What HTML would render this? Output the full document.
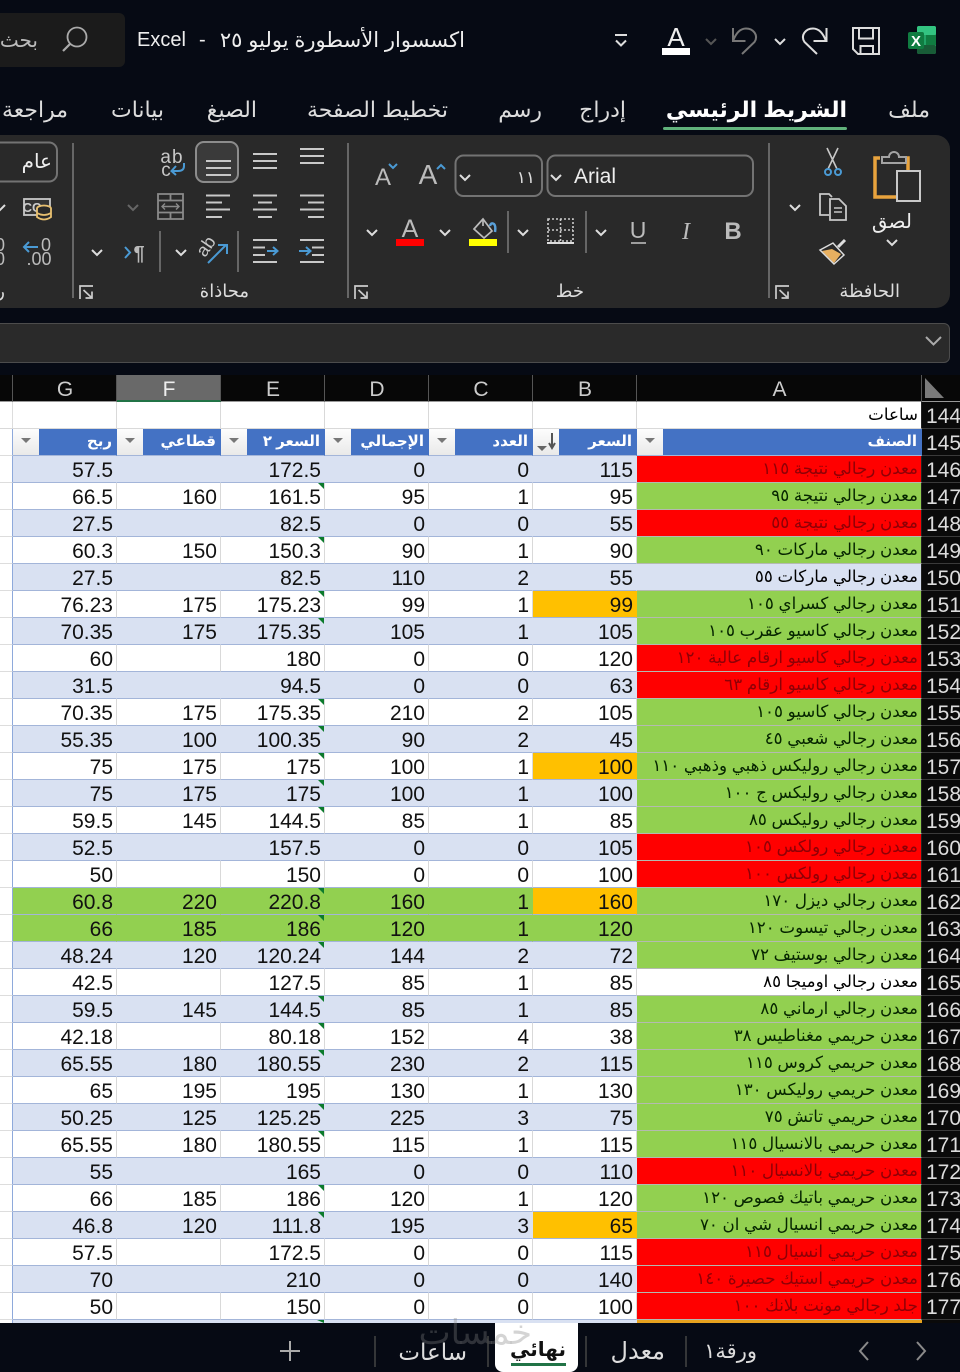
<!DOCTYPE html>
<html lang="ar">
<head>
<meta charset="utf-8">
<title>Excel</title>
<style>
html,body{margin:0;padding:0}
body{width:960px;height:1372px;overflow:hidden;position:relative;background:#060a14;font-family:"Liberation Sans","DejaVu Sans",sans-serif;color:#fff}
.abs{position:absolute}
.t{position:absolute;white-space:nowrap;font-family:"Liberation Sans","DejaVu Sans",sans-serif;color:#eee;direction:rtl}
.tab{font-size:22px;line-height:30px;top:95px;color:#ddd}
.lbl{font-size:18px;line-height:20px;top:281px;color:#ddd}
svg text{font-family:"Liberation Sans","DejaVu Sans",sans-serif}
.ch{position:absolute;top:375px;height:26px;line-height:29px;text-indent:1px;text-align:center;font-size:21px;color:#ccc;background:#070707;border-right:1px solid #555;border-bottom:1px solid #999;box-sizing:content-box}
table{position:absolute;left:0;top:402px;width:960px;table-layout:fixed;border-collapse:separate;border-spacing:0}
td{height:27px;box-sizing:border-box;padding:3px 3px 0 0;line-height:23px;font-size:21px;color:#111;text-align:right;white-space:nowrap;overflow:hidden;border-bottom:1px solid #a3b5d9;border-right:1px solid #d9d9d9;background:#fff;position:relative}
td:first-child{background:#fff;border-right:1px solid #8ea9db;border-bottom:1px solid #ddd;padding:0}
td:last-child{background:#0a0a0a;color:#ddd;text-align:left;padding-left:4px;padding-right:0;border-right:0;border-bottom:1px solid #3a3a3a;overflow:hidden}
tr.b td:not(:first-child):not(:last-child){background:#d9e1f2;border-right-color:#d9e1f2}
tr.g td:not(:first-child):not(:last-child){background:#92d050;border-right-color:#92d050}
td.a{direction:rtl;font-size:16.7px;padding-right:3px;padding-top:1px;vertical-align:top;border-right:1px solid #222;border-bottom:1px solid #b4bab0;color:#000;background:#fff}
tr td.r{background:#ff0000 !important;color:#8e0006;border-right-color:#222 !important}
tr td.n{background:#92d050 !important;color:#062500;border-right-color:#222 !important}
tr td.l{background:#d9e1f2 !important;border-right-color:#222 !important}
tr td.o{background:#ffc000 !important;border-right-color:#ffc000 !important}
td.k:after{content:"";position:absolute;right:-1px;top:0;width:0;height:0;border-top:7px solid #0b7a2c;border-left:7px solid transparent}
tr.h td:not(:last-child){background:#fff;border-bottom:1px solid #d9d9d9}
tr.f td:not(:first-child):not(:last-child){background:#4472c4;border-right:1px solid #4472c4;color:#fff;font-weight:bold;font-size:15px;direction:rtl;padding-right:4px;padding-top:1px;vertical-align:top}
.fb{position:absolute;left:0;top:0;width:26px;height:26px;background:linear-gradient(#fdfdfd,#e9e9e9);direction:ltr}
.fb:before{content:"";position:absolute;left:8px;top:9px;border-top:5px solid #777;border-left:5.5px solid transparent;border-right:5.5px solid transparent}
.fb.s:before{left:4px;top:17px;border-top:5px solid #666;border-left:5px solid transparent;border-right:5px solid transparent}
</style>
</head>
<body>

<!-- search box -->
<div class="abs" style="left:-10px;top:13px;width:135px;height:54px;background:#1b1b1b;border-radius:6px"></div>
<div class="t" style="right:922px;top:27px;font-size:20px;line-height:28px;color:#bbb">بحث</div>

<!-- title -->
<div class="t" style="left:137px;top:26px;font-size:20px;line-height:28px;direction:ltr">Excel</div>
<div class="t" style="left:199px;top:26px;font-size:20px;line-height:28px;direction:ltr">-</div>
<div class="t" style="right:495px;top:27px;font-size:21px;line-height:28px">اكسسوار الأسطورة يوليو ٢٥</div>

<!-- tabs -->
<div class="t tab" style="right:30px">ملف</div>
<div class="t tab" style="right:113px;font-weight:bold;color:#fff">الشريط الرئيسي</div>
<div class="abs" style="left:663px;top:127px;width:184px;height:3px;background:#61b27c;border-radius:2px"></div>
<div class="t tab" style="right:334px">إدراج</div>
<div class="t tab" style="right:418px">رسم</div>
<div class="t tab" style="right:512px">تخطيط الصفحة</div>
<div class="t tab" style="right:703px">الصيغ</div>
<div class="t tab" style="right:796px">بيانات</div>
<div class="t tab" style="right:892px">مراجعة</div>

<!-- ribbon bg -->
<div class="abs" style="left:-20px;top:135px;width:970px;height:173px;background:#292929;border-radius:14px"></div>
<!-- formula bar -->
<div class="abs" style="left:-10px;top:323px;width:958px;height:38px;background:#2a2a2a;border:1px solid #4c4c4c;border-radius:6px"></div>

<!-- ribbon text -->
<div class="t" style="right:48px;top:208px;font-size:20px;line-height:28px">لصق</div>
<div class="t lbl" style="right:60px">الحافظة</div>
<div class="t lbl" style="right:376px">خط</div>
<div class="t lbl" style="right:711px">محاذاة</div>
<div class="t" style="right:908px;top:148px;font-size:20px;line-height:28px">عام</div>
<div class="t" style="left:574px;top:163px;font-size:21px;line-height:28px;direction:ltr">Arial</div>
<div class="t" style="right:425px;top:165px;font-size:17px;line-height:26px;color:#ddd">١١</div>

<svg class="abs" style="left:0;top:0" width="960" height="372" viewBox="0 0 960 372" fill="none" stroke-linecap="butt">
  <!-- search -->
  <circle cx="77" cy="37" r="9.5" stroke="#aaa" stroke-width="1.8"/><path d="M70 44L63 51" stroke="#aaa" stroke-width="2.2"/>
  <!-- excel -->
  <rect x="917" y="26" width="19" height="28" rx="2" fill="#21a366"/><rect x="917" y="26" width="19" height="9" rx="2" fill="#33c481"/><rect x="917" y="45" width="19" height="9" rx="2" fill="#185c37"/><rect x="926" y="35" width="10" height="10" fill="#107c41"/>
  <rect x="908" y="32" width="16" height="17" rx="2" fill="#107c41"/><text x="916" y="46" text-anchor="middle" font-size="15" font-weight="bold" fill="#fff">X</text>
  <!-- save -->
  <path d="M853 28H879V54H858L853 49Z" stroke="#ddd" stroke-width="2"/><path d="M859 28V38.5H873V28M860.5 54V46H873V54" stroke="#ddd" stroke-width="2"/>
  <!-- redo -->
  <path d="M817 54L804.5 42C800 35 806 28.5 813 28.5C819 28.5 823 33 826 41" stroke="#ddd" stroke-width="2"/><path d="M826.5 28V41H813.5" stroke="#ddd" stroke-width="2"/>
  <path d="M775 39l5 5l5-5" stroke="#ddd" stroke-width="2"/>
  <!-- undo -->
  <path d="M742 54L754.5 42C759 35 753 28.5 746 28.5C740 28.5 736 33 733 41" stroke="#777" stroke-width="2"/><path d="M733 28V41H745.5" stroke="#777" stroke-width="2"/>
  <path d="M706 39l5 5l5-5" stroke="#555" stroke-width="2"/>
  <!-- font colour A -->
  <text x="676" y="46" text-anchor="middle" font-size="26" fill="#eee">A</text>
  <rect x="662" y="48" width="28" height="7" fill="#fff"/>
  <!-- customize -->
  <path d="M615 35h12" stroke="#ddd" stroke-width="2"/><path d="M616 40.5l5 5l5-5" stroke="#ddd" stroke-width="2"/>

  <!-- paste -->
  <path d="M880 158H875V197H896M902 158H908V170" stroke="#e8a33d" stroke-width="3.5"/>
  <path d="M882 163V157H889A5 5 0 0 1 899 157H906V163Z" stroke="#a3a3a3" stroke-width="2" fill="#292929"/>
  <rect x="897" y="171" width="23" height="30" stroke="#c8c8c8" stroke-width="2" fill="#292929"/>
  <path d="M887 240l5 5l5-5" stroke="#ddd" stroke-width="2"/>
  <!-- cut -->
  <path d="M827 148L837 169M838 148L828 169" stroke="#c8c8c8" stroke-width="1.6"/>
  <circle cx="828" cy="172" r="3" stroke="#4a9ad4" stroke-width="2"/><circle cx="838" cy="172" r="3" stroke="#4a9ad4" stroke-width="2"/>
  <!-- copy -->
  <path d="M832 197L829 194H820V215H829" stroke="#c8c8c8" stroke-width="1.8"/>
  <path d="M830 199H839L846 206V220H830Z" stroke="#c8c8c8" stroke-width="1.8"/><path d="M834 208h8M834 212h8" stroke="#c8c8c8" stroke-width="1.4"/>
  <path d="M790 205l5 5l5-5" stroke="#ddd" stroke-width="2"/>
  <!-- brush -->
  <path d="M822 251L834 263L841 254L832 249Z" fill="#e8b060"/>
  <path d="M820 250L833 243L844 255L834 264Z" stroke="#ddd" stroke-width="1.5"/>
  <path d="M838 247L845 240" stroke="#ddd" stroke-width="3"/>
  <!-- seps -->
  <path d="M769 143V298M348 143V298M73 143V298" stroke="#666" stroke-width="2"/>
  <path d="M586 211V253M508 211V253M238 231V272M160 231V272" stroke="#666" stroke-width="2"/>
  <!-- launchers -->
  <path d="M776 299V286H789M779.5 290L788 298M788 291.5V298H781.5" stroke="#ccc" stroke-width="1.7"/>
  <path d="M355 299V286H368M358.5 290L367 298M367 291.5V298H360.5" stroke="#ccc" stroke-width="1.7"/>
  <path d="M80 299V286H93M83.5 290L92 298M92 291.5V298H85.5" stroke="#ccc" stroke-width="1.7"/>

  <!-- combos -->
  <rect x="547.5" y="155.5" width="205.5" height="40.5" rx="8" stroke="#737373" stroke-width="2"/>
  <rect x="455.5" y="155.5" width="86.5" height="40.5" rx="8" stroke="#737373" stroke-width="2"/>
  <path d="M551 175l5 5l5-5M460 175l5 5l5-5" stroke="#ddd" stroke-width="2"/>
  <!-- grow/shrink -->
  <text x="428" y="184" text-anchor="middle" font-size="28" fill="#bbb">A</text>
  <path d="M437 169l4-4l4 4" stroke="#4a9ad4" stroke-width="2"/>
  <text x="383" y="185" text-anchor="middle" font-size="24" fill="#bbb">A</text>
  <path d="M389 164l4 4l4-4" stroke="#4a9ad4" stroke-width="2"/>
  <!-- BIU -->
  <text x="733" y="239" text-anchor="middle" font-size="24" font-weight="bold" fill="#bbb">B</text>
  <text x="686" y="239" text-anchor="middle" font-size="24" font-style="italic" fill="#bbb" style="font-family:'Liberation Serif',serif">I</text>
  <text x="638" y="238" text-anchor="middle" font-size="23" fill="#bbb">U</text><path d="M631 243H646" stroke="#bbb" stroke-width="1.6"/>
  <path d="M596 230l5 5l5-5M518 230l5 5l5-5M440 230l5 5l5-5M367 230l5 5l5-5" stroke="#ddd" stroke-width="2"/>
  <!-- borders -->
  <path d="M548 219H573V241H548ZM560.5 219V241M548 230H573" stroke="#ccc" stroke-width="1.6" stroke-dasharray="2 2"/><path d="M547 243H574" stroke="#ddd" stroke-width="2"/>
  <!-- fill colour -->
  <path d="M474 229L483 219L492 231L484 238Z" stroke="#bbb" stroke-width="1.7"/><path d="M483 219V226" stroke="#bbb" stroke-width="1.7"/><path d="M490 226Q491 222 494 224Q496 226 495 232" stroke="#5aa0d8" stroke-width="2.5"/>
  <rect x="469" y="239" width="28" height="7" fill="#ffff00"/>
  <!-- font colour -->
  <text x="410" y="237" text-anchor="middle" font-size="25" fill="#bbb">A</text>
  <rect x="396" y="239" width="28" height="7" fill="#ff0000"/>

  <!-- align rows -->
  <g stroke="#c8c8c8" stroke-width="2">
    <path d="M300 149H324M300 156H324M300 163H324"/>
    <path d="M253 154H277M253 161H277M253 168H277"/>
    <path d="M300 195.5H324M308 202.5H324M300 209.5H324M308 217H324"/>
    <path d="M253 195.5H277M258 202.5H272M253 209.5H277M258 217H272"/>
    <path d="M206 195.5H230M206 202.5H222M206 209.5H230M206 217H222"/>
    <path d="M300 240H324M312 247.5H324M312 255H324M300 262H324"/>
    <path d="M253 240H277M253 247.5H265M253 255H265M253 262H277"/>
  </g>
  <rect x="196" y="142" width="42" height="40" rx="8" fill="#3a3a3a" stroke="#8c8c8c" stroke-width="2"/>
  <path d="M206 161H231M206 168H231M206 175H231" stroke="#c8c8c8" stroke-width="2"/>
  <!-- wrap -->
  <text x="172" y="163" text-anchor="middle" font-size="19" fill="#c8c8c8" letter-spacing="1">ab</text>
  <text x="166" y="176" text-anchor="middle" font-size="19" fill="#c8c8c8">c</text>
  <path d="M184 163V166Q184 171 178 171H172M176 166L171.5 171L176 175" stroke="#4a9ad4" stroke-width="2"/>
  <!-- merge -->
  <path d="M158 194H183V219H158ZM158 200.5H183M158 212.5H183M170.5 194V200.5M170.5 212.5V219" stroke="#8a8a8a" stroke-width="1.8"/>
  <path d="M162 206.5H179M165 203.5L162 206.5L165 209.5M176 203.5L179 206.5L176 209.5" stroke="#8a8a8a" stroke-width="1.4"/>
  <path d="M128 205l5 5l5-5" stroke="#666" stroke-width="2"/>
  <!-- indent arrows -->
  <path d="M299 251H310M306 247L310.5 251L306 255" stroke="#4a9ad4" stroke-width="2"/>
  <path d="M267 251H277M273 247L277.5 251L273 255" stroke="#4a9ad4" stroke-width="2"/>
  <!-- orientation -->
  <text transform="translate(205 258) rotate(-55)" font-size="18" fill="#c8c8c8">ab</text>
  <path d="M208 263L226 245M218 245H227V254" stroke="#4a9ad4" stroke-width="2"/>
  <path d="M176 250l5 5l5-5M92 250l5 5l5-5" stroke="#ddd" stroke-width="2"/>
  <!-- paragraph -->
  <path d="M125 247L130 252.5L125 258" stroke="#4a9ad4" stroke-width="2"/>
  <text x="139" y="260" text-anchor="middle" font-size="20" font-weight="bold" fill="#bbb">¶</text>
  <!-- number -->
  <rect x="-10" y="142.5" width="67" height="39" rx="8" stroke="#737373" stroke-width="2"/>
  <path d="M-5 205l5 5l5-5" stroke="#ddd" stroke-width="2"/>
  <rect x="24" y="199" width="26" height="16" fill="#333" stroke="#c8c8c8" stroke-width="1.8"/>
  <text x="32" y="212" text-anchor="middle" font-size="13" font-weight="bold" fill="#ccc">CC</text>
  <ellipse cx="44" cy="208.5" rx="7" ry="3" fill="#292929" stroke="#e8c070" stroke-width="1.8"/>
  <path d="M37 208.5V217Q44 222 51 217V208.5M37 213Q44 217 51 213" stroke="#e8c070" stroke-width="1.8" fill="#292929"/>
  <path d="M38 247H24M29 242L24 247L29 252" stroke="#4a9ad4" stroke-width="2"/>
  <text x="46" y="251" text-anchor="middle" font-size="18" fill="#bbb">0</text>
  <text x="39" y="265" text-anchor="middle" font-size="18" fill="#bbb">.00</text>
  <text x="0" y="251" text-anchor="middle" font-size="18" fill="#bbb">0</text>
  <text x="0" y="265" text-anchor="middle" font-size="18" fill="#bbb">0</text>
  <!-- formula chevron -->
  <path d="M926 337l7.5 7.5l7.5-7.5" stroke="#aaa" stroke-width="2"/>
</svg>
<div class="t lbl" style="right:955px">ر</div>

<!-- column headers -->
<div class="ch" style="left:0;width:12px"></div>
<div class="ch" style="left:13px;width:103px">G</div>
<div class="ch" style="left:117px;width:103px;background:#696969;border-bottom:2px solid #217346;height:25px;color:#eee">F</div>
<div class="ch" style="left:221px;width:103px">E</div>
<div class="ch" style="left:325px;width:103px">D</div>
<div class="ch" style="left:429px;width:103px">C</div>
<div class="ch" style="left:533px;width:103px">B</div>
<div class="ch" style="left:637px;width:284px">A</div>
<div class="ch" style="left:922px;width:38px;border-right:0"></div>
<div class="abs" style="left:921px;top:375px;width:1px;height:27px;background:#555"></div>
<svg class="abs" style="left:922px;top:375px" width="38" height="27"><path d="M3 3V23H22Z" fill="#7a7a7a"/></svg>

<table>
<colgroup><col style="width:13px"><col style="width:104px"><col style="width:104px"><col style="width:104px"><col style="width:104px"><col style="width:104px"><col style="width:104px"><col style="width:285px"><col style="width:38px"></colgroup>
<tr class="h"><td style="border-right-color:#ddd"></td><td></td><td></td><td></td><td></td><td></td><td></td><td class="a">ساعات</td><td>144</td></tr>
<tr class="f"><td></td>
<td><span class="fb"></span>ربح</td>
<td><span class="fb"></span>قطاعي</td>
<td><span class="fb"></span>السعر ٢</td>
<td><span class="fb"></span>الإجمالي</td>
<td><span class="fb"></span>العدد</td>
<td><span class="fb s"></span><svg style="position:absolute;left:0;top:0" width="26" height="26"><path d="M19 4V18M16 14L19 19L22 14" stroke="#555" stroke-width="2" fill="none"/></svg>السعر</td>
<td class="a" style="background:#4472c4 !important;font-weight:bold;color:#fff;font-size:15px;border-bottom:1px solid #a3b5d9;padding-right:4px;padding-top:1px"><span class="fb"></span>الصنف</td><td>145</td></tr>
<tr class="b"><td></td><td>57.5</td><td></td><td>172.5</td><td>0</td><td>0</td><td>115</td><td class="a r">معدن رجالي نتيجة ١١٥</td><td>146</td></tr>
<tr class="w"><td></td><td>66.5</td><td>160</td><td class="k">161.5</td><td>95</td><td>1</td><td>95</td><td class="a n">معدن رجالي نتيجة ٩٥</td><td>147</td></tr>
<tr class="b"><td></td><td>27.5</td><td></td><td>82.5</td><td>0</td><td>0</td><td>55</td><td class="a r">معدن رجالي نتيجة ٥٥</td><td>148</td></tr>
<tr class="w"><td></td><td>60.3</td><td>150</td><td class="k">150.3</td><td>90</td><td>1</td><td>90</td><td class="a n">معدن رجالي ماركات ٩٠</td><td>149</td></tr>
<tr class="b"><td></td><td>27.5</td><td></td><td>82.5</td><td>110</td><td>2</td><td>55</td><td class="a l">معدن رجالي ماركات ٥٥</td><td>150</td></tr>
<tr class="w"><td></td><td>76.23</td><td>175</td><td class="k">175.23</td><td>99</td><td>1</td><td class="o">99</td><td class="a n">معدن رجالي كسراي ١٠٥</td><td>151</td></tr>
<tr class="b"><td></td><td>70.35</td><td>175</td><td class="k">175.35</td><td>105</td><td>1</td><td>105</td><td class="a n">معدن رجالي كاسيو عقرب ١٠٥</td><td>152</td></tr>
<tr class="w"><td></td><td>60</td><td></td><td>180</td><td>0</td><td>0</td><td>120</td><td class="a r">معدن رجالي كاسيو ارقام عالية ١٢٠</td><td>153</td></tr>
<tr class="b"><td></td><td>31.5</td><td></td><td>94.5</td><td>0</td><td>0</td><td>63</td><td class="a r">معدن رجالي كاسيو ارقام ٦٣</td><td>154</td></tr>
<tr class="w"><td></td><td>70.35</td><td>175</td><td class="k">175.35</td><td>210</td><td>2</td><td>105</td><td class="a n">معدن رجالي كاسيو ١٠٥</td><td>155</td></tr>
<tr class="b"><td></td><td>55.35</td><td>100</td><td class="k">100.35</td><td>90</td><td>2</td><td>45</td><td class="a n">معدن رجالي شعبي ٤٥</td><td>156</td></tr>
<tr class="w"><td></td><td>75</td><td>175</td><td class="k">175</td><td>100</td><td>1</td><td class="o">100</td><td class="a n">معدن رجالي روليكس ذهبي وذهبي ١١٠</td><td>157</td></tr>
<tr class="b"><td></td><td>75</td><td>175</td><td class="k">175</td><td>100</td><td>1</td><td>100</td><td class="a n">معدن رجالي روليكس ج ١٠٠</td><td>158</td></tr>
<tr class="w"><td></td><td>59.5</td><td>145</td><td class="k">144.5</td><td>85</td><td>1</td><td>85</td><td class="a n">معدن رجالي روليكس ٨٥</td><td>159</td></tr>
<tr class="b"><td></td><td>52.5</td><td></td><td>157.5</td><td>0</td><td>0</td><td>105</td><td class="a r">معدن رجالي رولكس ١٠٥</td><td>160</td></tr>
<tr class="w"><td></td><td>50</td><td></td><td>150</td><td>0</td><td>0</td><td>100</td><td class="a r">معدن رجالي رولكس ١٠٠</td><td>161</td></tr>
<tr class="g"><td></td><td>60.8</td><td>220</td><td class="k">220.8</td><td>160</td><td>1</td><td class="o">160</td><td class="a n">معدن رجالي ديزل ١٧٠</td><td>162</td></tr>
<tr class="g"><td></td><td>66</td><td>185</td><td class="k">186</td><td>120</td><td>1</td><td>120</td><td class="a n">معدن رجالي تيسوت ١٢٠</td><td>163</td></tr>
<tr class="b"><td></td><td>48.24</td><td>120</td><td class="k">120.24</td><td>144</td><td>2</td><td>72</td><td class="a n">معدن رجالي بوستيف ٧٢</td><td>164</td></tr>
<tr class="w"><td></td><td>42.5</td><td></td><td>127.5</td><td>85</td><td>1</td><td>85</td><td class="a">معدن رجالي اوميجا ٨٥</td><td>165</td></tr>
<tr class="b"><td></td><td>59.5</td><td>145</td><td class="k">144.5</td><td>85</td><td>1</td><td>85</td><td class="a n">معدن رجالي ارماني ٨٥</td><td>166</td></tr>
<tr class="w"><td></td><td>42.18</td><td></td><td class="k">80.18</td><td>152</td><td>4</td><td>38</td><td class="a n">معدن حريمي مغناطيس ٣٨</td><td>167</td></tr>
<tr class="b"><td></td><td>65.55</td><td>180</td><td class="k">180.55</td><td>230</td><td>2</td><td>115</td><td class="a n">معدن حريمي كروس ١١٥</td><td>168</td></tr>
<tr class="w"><td></td><td>65</td><td>195</td><td>195</td><td>130</td><td>1</td><td>130</td><td class="a n">معدن حريمي روليكس ١٣٠</td><td>169</td></tr>
<tr class="b"><td></td><td>50.25</td><td>125</td><td class="k">125.25</td><td>225</td><td>3</td><td>75</td><td class="a n">معدن حريمي تاتش ٧٥</td><td>170</td></tr>
<tr class="w"><td></td><td>65.55</td><td>180</td><td class="k">180.55</td><td>115</td><td>1</td><td>115</td><td class="a n">معدن حريمي بالانسيال ١١٥</td><td>171</td></tr>
<tr class="b"><td></td><td>55</td><td></td><td>165</td><td>0</td><td>0</td><td>110</td><td class="a r">معدن حريمي بالانسيال ١١٠</td><td>172</td></tr>
<tr class="w"><td></td><td>66</td><td>185</td><td class="k">186</td><td>120</td><td>1</td><td>120</td><td class="a n">معدن حريمي باتيك فصوص ١٢٠</td><td>173</td></tr>
<tr class="b"><td></td><td>46.8</td><td>120</td><td class="k">111.8</td><td>195</td><td>3</td><td class="o">65</td><td class="a n">معدن حريمي انسيال شي ان ٧٠</td><td>174</td></tr>
<tr class="w"><td></td><td>57.5</td><td></td><td>172.5</td><td>0</td><td>0</td><td>115</td><td class="a r">معدن حريمي انسيال ١١٥</td><td>175</td></tr>
<tr class="b"><td></td><td>70</td><td></td><td>210</td><td>0</td><td>0</td><td>140</td><td class="a r">معدن حريمي استيك حصيرة ١٤٠</td><td>176</td></tr>
<tr class="w"><td></td><td>50</td><td></td><td>150</td><td>0</td><td>0</td><td>100</td><td class="a r">جلد رجالي مونت بلانك ١٠٠</td><td>177</td></tr>
</table>

<!-- partial row 178 -->
<div class="abs" style="left:0;top:1320px;width:12px;height:3px;background:#fff"></div>
<div class="abs" style="left:12px;top:1320px;width:625px;height:3px;background:#d9e1f2;border-left:1px solid #8ea9db;box-sizing:border-box"></div>
<div class="abs" style="left:637px;top:1320px;width:285px;height:3px;background:#e6a21e"></div>
<div class="abs" style="left:922px;top:1320px;width:38px;height:3px;background:#0a0a0a"></div>
<div class="abs" style="left:317px;top:1320px;width:0;height:0;border-top:3px solid #0b7a2c;border-left:7px solid transparent"></div>

<!-- bottom bar -->
<div class="abs" style="left:0;top:1323px;width:960px;height:49px;background:#060a14"></div>
<div class="abs" style="left:495px;top:1323px;width:83px;height:49px;background:#fff;border-radius:0 0 8px 8px"></div>
<div class="t" style="right:394px;top:1334px;font-size:20px;line-height:32px;color:#111;font-weight:bold">نهائي</div>
<div class="abs" style="left:511px;top:1363px;width:55px;height:3px;background:#217346"></div>
<div class="t" style="right:493px;top:1336px;font-size:23px;line-height:32px;color:#ddd">ساعات</div>
<div class="t" style="right:295px;top:1336px;font-size:24px;line-height:32px;color:#ddd">معدل</div>
<div class="t" style="right:203px;top:1336px;font-size:21px;line-height:32px;color:#ddd">ورقة١</div>
<div class="t" style="right:428px;top:1315px;font-size:34px;line-height:36px;color:rgba(130,130,130,.34)">خمسات</div>
<svg class="abs" style="left:0;top:1323px" width="960" height="49" fill="none">
  <path d="M280 28H300M290 18V38" stroke="#aaa" stroke-width="2"/>
  <path d="M375 13V44M488 13V44M586 13V44M686 13V44" stroke="#444" stroke-width="1.5"/>
  <path d="M868 19L860 28L868 37" stroke="#8a8a8a" stroke-width="2"/>
  <path d="M917 19L925 28L917 37" stroke="#8a8a8a" stroke-width="2"/>
</svg>
</body>
</html>
